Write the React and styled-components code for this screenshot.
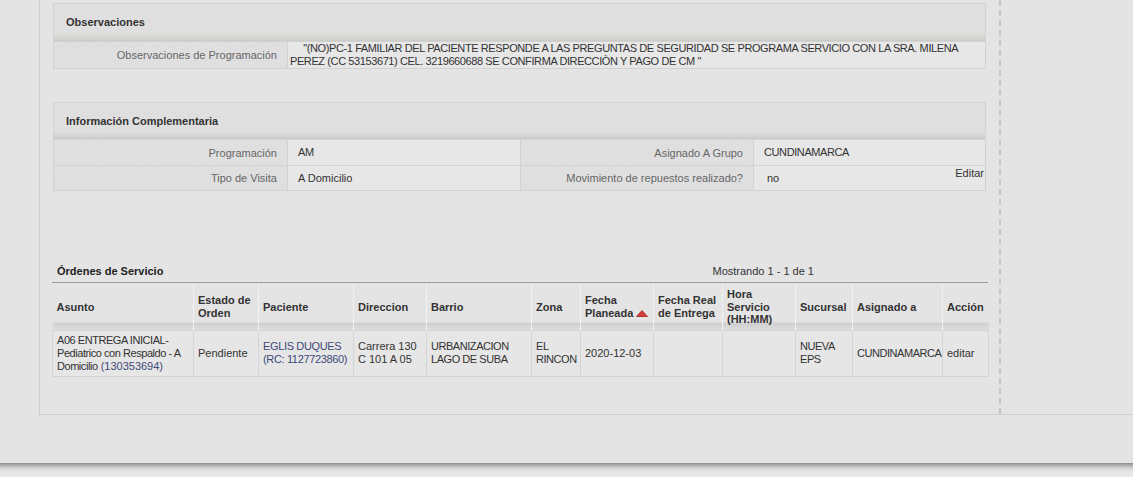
import React from "react";
import styled, { createGlobalStyle } from "styled-components";

const GlobalStyle = createGlobalStyle`
  html, body { margin: 0; padding: 0; background: #e4e4e4; }
  body { font-family: "Liberation Sans", Arial, sans-serif; font-size: 11px; color: #333; }
`;

const Page = styled.div`
  width: 1133px;
  height: 477px;
  display: flex;
  flex-direction: column;
  overflow: hidden;
`;

const Frame = styled.div`
  box-sizing: border-box;
  height: 415px;
  margin-left: 39px;
  border-left: 1px solid #cdcdcd;
  border-bottom: 1px solid #cdcdcd;
  display: flex;
`;

const MainCol = styled.div`
  box-sizing: border-box;
  width: 961px;
  padding-left: 12px;
  border-right: 2px dashed #c6c6c6;
  display: flex;
  flex-direction: column;
`;

const SideCol = styled.div`
  flex: 1;
`;

const Spacer = styled.div`
  flex: 1;
`;

const Section = styled.div`
  box-sizing: border-box;
  width: 933px;
  margin: ${(p) => p.$top}px 0 0 1px;
  border: 1px solid #d2d2d2;
  background: #e3e3e3;
`;

const SectionHeader = styled.div`
  box-sizing: border-box;
  height: ${(p) => p.$h}px;
  padding: 0 0 1px 12px;
  display: flex;
  align-items: center;
  font-weight: bold;
  color: #333;
  background: linear-gradient(to bottom, #dfdfdf 0%, #dfdfdf 78%, #d6d6d3 90%, #cbcbc6 100%);
`;

const FieldGrid = styled.div`
  display: grid;
  grid-template-columns: ${(p) => p.$cols};
`;

const Label = styled.div`
  box-sizing: border-box;
  height: ${(p) => p.$h}px;
  padding-right: 10px;
  display: flex;
  align-items: center;
  justify-content: flex-end;
  color: #666;
  border-top: 1px solid #d2d2d2;
  border-left: ${(p) => (p.$first ? "none" : "1px solid #d2d2d2")};
  background: repeating-linear-gradient(135deg, #dedede 0, #dedede 2px, #e0e0e0 2px, #e0e0e0 4px);
`;

const Value = styled.div`
  box-sizing: border-box;
  height: ${(p) => p.$h}px;
  padding-left: ${(p) => p.$pad}px;
  padding-right: 1px;
  display: flex;
  align-items: center;
  color: #333;
  border-top: 1px solid #d2d2d2;
  border-left: 1px solid #d2d2d2;
  background: #e7e7e7;
  line-height: 13px;
  white-space: pre-wrap;
  letter-spacing: ${(p) => (p.$caps ? "-0.4px" : "normal")};
`;

const ValueText = styled.span`
  flex: 1;
  padding-left: ${(p) => p.$shift || 0}px;
`;

const EditLink = styled.span`
  align-self: flex-start;
  margin-top: 1px;
  color: #333;
`;

const Orders = styled.div`
  margin-top: 73px;
  width: 936px;
`;

const OrdersBar = styled.div`
  box-sizing: border-box;
  height: 19px;
  display: flex;
  align-items: center;
  justify-content: space-between;
  padding: 0 174px 5px 5px;
  border-bottom: 1px solid #9c9c9c;
`;

const OrdersTitle = styled.span`
  font-weight: bold;
  color: #222;
`;

const Showing = styled.span`
  color: #333;
`;

const Table = styled.table`
  margin-top: 1px;
  width: 936px;
  border-collapse: collapse;
  table-layout: fixed;
`;

const Th = styled.th`
  box-sizing: border-box;
  height: 46px;
  padding: 0 2px 0 4px;
  text-align: left;
  vertical-align: middle;
  font-weight: bold;
  font-size: 11px;
  line-height: 12.5px;
  color: #333;
  border-left: 1px solid #f1f1f1;
  background: linear-gradient(to bottom, #e4e4e4 0, #e4e4e4 38px, #cfcfcf 39px, #d7d7d7 43px, #dcdcdc 46px);
  &:first-child { border-left: none; }
`;

const Td = styled.td`
  box-sizing: border-box;
  height: 46px;
  padding: 0 1px 0 4px;
  vertical-align: middle;
  line-height: 13px;
  color: #333;
  border: 1px solid #d4d4d4;
  background: #e6e6e6;
  letter-spacing: ${(p) => (p.$caps ? "-0.45px" : "normal")};
`;

const Link = styled.span`
  color: #3e4a78;
  letter-spacing: ${(p) => (p.$plain ? "normal" : "-0.35px")};
`;

const SortArrow = styled.svg`
  width: 12px;
  height: 7px;
  margin-left: 3px;
  vertical-align: 0px;
`;

const Footer = styled.div`
  height: 14px;
  margin-top: 48px;
  background: linear-gradient(to bottom, #8a8a8a 0, #adadad 2px, #d2d2d2 5px, #e4e4e4 8px, #e8e8e8 14px);
`;

const widths = [141, 65, 95, 73, 105, 49, 73, 69, 73, 57, 90, 46];

export default function App() {
  return (
    <>
      <GlobalStyle />
      <Page>
        <Frame>
          <MainCol>
            <Section $top={3}>
              <SectionHeader $h={37}>Observaciones</SectionHeader>
              <FieldGrid $cols="233px 1fr">
                <Label $h={27} $first>Observaciones de Programación</Label>
                <Value $h={27} $pad={2} $caps>
                  {"     \"(NO)PC-1 FAMILIAR DEL PACIENTE RESPONDE A LAS PREGUNTAS DE SEGURIDAD SE PROGRAMA SERVICIO CON LA SRA. MILENA\nPEREZ (CC 53153671) CEL. 3219660688 SE CONFIRMA DIRECCIÒN Y PAGO DE CM \""}
                </Value>
              </FieldGrid>
            </Section>

            <Section $top={33}>
              <SectionHeader $h={36}>Información Complementaria</SectionHeader>
              <FieldGrid $cols="233px 233px 233px 1fr">
                <Label $h={26} $first>Programación</Label>
                <Value $h={26} $pad={10} $caps>AM</Value>
                <Label $h={26}>Asignado A Grupo</Label>
                <Value $h={26} $pad={10} $caps>CUNDINAMARCA</Value>
                <Label $h={25} $first>Tipo de Visita</Label>
                <Value $h={25} $pad={10}>A Domicilio</Value>
                <Label $h={25}>Movimiento de repuestos realizado?</Label>
                <Value $h={25} $pad={10}>
                  <ValueText $shift={3}>no</ValueText>
                  <EditLink>Editar</EditLink>
                </Value>
              </FieldGrid>
            </Section>

            <Orders>
              <OrdersBar>
                <OrdersTitle>Órdenes de Servicio</OrdersTitle>
                <Showing>Mostrando 1 - 1 de 1</Showing>
              </OrdersBar>
              <Table>
                <colgroup>
                  {widths.map((w, i) => (
                    <col key={i} style={{ width: w }} />
                  ))}
                </colgroup>
                <thead>
                  <tr>
                    <Th>Asunto</Th>
                    <Th>Estado de Orden</Th>
                    <Th>Paciente</Th>
                    <Th>Direccion</Th>
                    <Th>Barrio</Th>
                    <Th>Zona</Th>
                    <Th>
                      Fecha Planeada
                      <SortArrow viewBox="0 0 12 7">
                        <polygon points="0.5,6.5 6,0.5 11.5,6.5" fill="#d9393a" stroke="#9e2222" strokeWidth="0.8" />
                      </SortArrow>
                    </Th>
                    <Th>Fecha Real de Entrega</Th>
                    <Th>Hora Servicio (HH:MM)</Th>
                    <Th>Sucursal</Th>
                    <Th>Asignado a</Th>
                    <Th>Acción</Th>
                  </tr>
                </thead>
                <tbody>
                  <tr>
                    <Td $caps>
                      A06 ENTREGA INICIAL-Pediatrico con Respaldo - A Domicilio<Link $plain>{" (130353694)"}</Link>
                    </Td>
                    <Td>Pendiente</Td>
                    <Td>
                      <Link>EGLIS DUQUES (RC: 1127723860)</Link>
                    </Td>
                    <Td>Carrera 130 C 101 A 05</Td>
                    <Td $caps>URBANIZACION LAGO DE SUBA</Td>
                    <Td $caps>EL RINCON</Td>
                    <Td>2020-12-03</Td>
                    <Td></Td>
                    <Td></Td>
                    <Td $caps>NUEVA EPS</Td>
                    <Td $caps>CUNDINAMARCA</Td>
                    <Td>editar</Td>
                  </tr>
                </tbody>
              </Table>
            </Orders>
            <Spacer />
          </MainCol>
          <SideCol />
        </Frame>
        <Footer />
      </Page>
    </>
  );
}
